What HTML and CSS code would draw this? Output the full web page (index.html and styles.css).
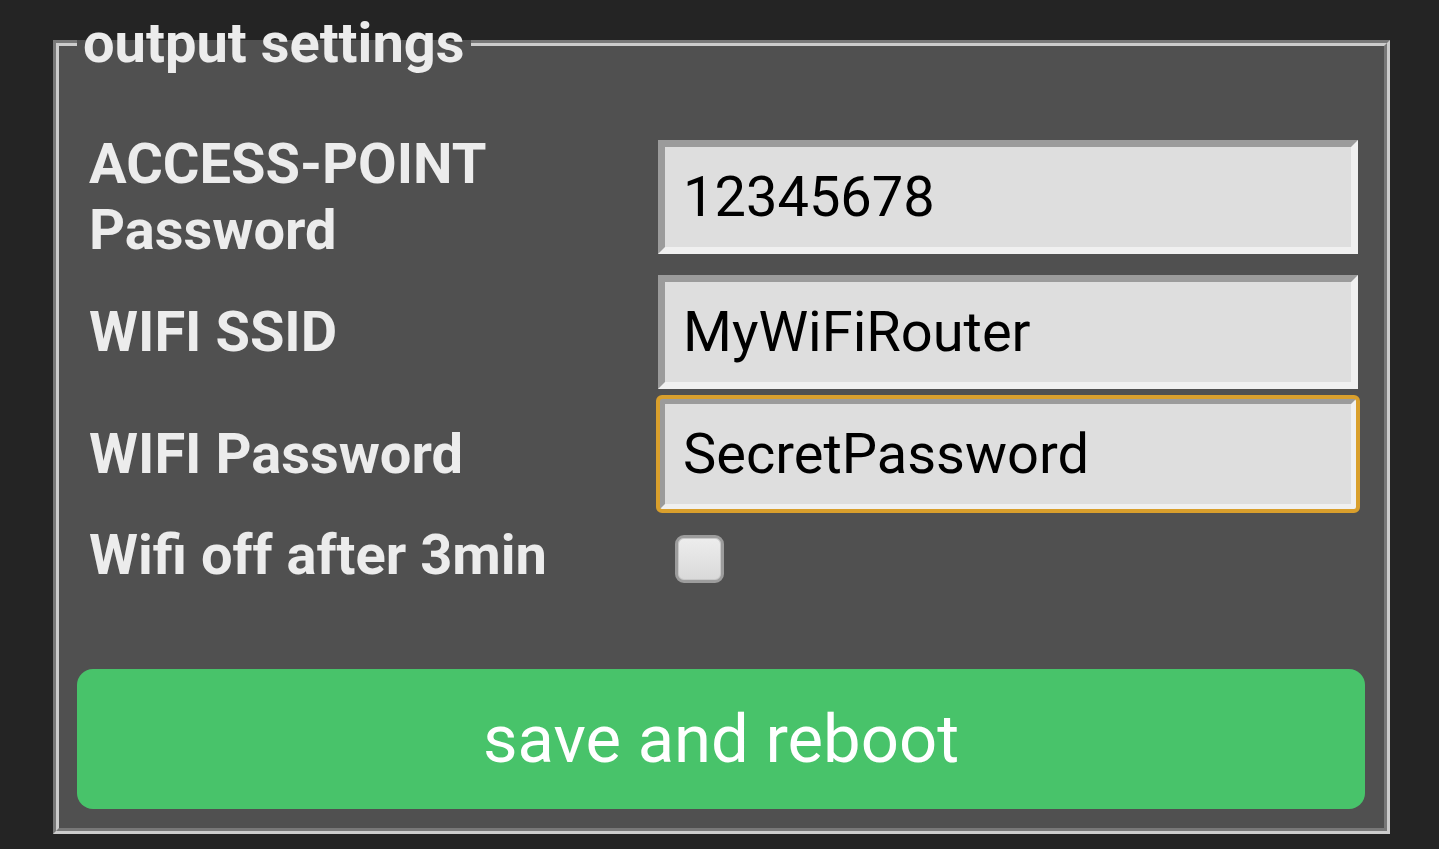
FILE: index.html
```html
<!DOCTYPE html>
<html lang="en">
<head>
<meta charset="utf-8">
<title>output settings</title>
<link rel="stylesheet" href="styles.css">
</head>
<body>
<div class="page">
  <fieldset class="panel">
    <legend class="panel-title">output settings</legend>
    <div class="form-grid">
      <label class="field-label field-label--tall" for="ap-pass">ACCESS-POINT Password</label>
      <input class="field-input" id="ap-pass" type="text" value="12345678">

      <label class="field-label" for="ssid">WIFI SSID</label>
      <input class="field-input" id="ssid" type="text" value="MyWiFiRouter">

      <label class="field-label" for="wifi-pass">WIFI Password</label>
      <input class="field-input field-input--focused" id="wifi-pass" type="text" value="SecretPassword">

      <label class="field-label field-label--last" for="wifi-off">Wifi off after 3min</label>
      <div class="check-cell"><span class="checkbox" id="wifi-off" role="checkbox" aria-checked="false"></span></div>
    </div>
    <button class="save-button" type="button">save and reboot</button>
  </fieldset>
</div>
</body>
</html>
```

FILE: styles.css
```css
html, body {
  margin: 0;
  padding: 0;
  background: #242424;
}

body {
  font-family: Roboto, "Liberation Sans", sans-serif;
  width: 1439px;
  height: 849px;
  overflow: hidden;
}

.page {
  padding: 10px 49px 0 53px;
}

.panel {
  margin: 0;
  min-inline-size: 0;
  border: 6px groove #cccccc;
  background: #505050;
  padding: 51px 19px 19px 18px;
  display: flex;
  flex-direction: column;
}

.panel-title {
  font-size: 56px;
  line-height: 66px;
  font-weight: 700;
  color: #ececec;
  padding: 0 6px;
}

.form-grid {
  display: grid;
  grid-template-columns: 569px 700px;
  row-gap: 8px;
  align-items: center;
  margin: 0 7px 0 12px;
}

.field-label {
  font-size: 56px;
  line-height: 66px;
  font-weight: 700;
  color: #ececec;
}

.field-label--tall {
  padding: 4px 0;
  width: 440px;
}

.field-label--last {
  margin-top: 3px;
}

.field-input {
  box-sizing: border-box;
  width: 700px;
  height: 114px;
  margin: 0;
  border: 7px solid;
  border-color: #9b9b9b #f0f0f0 #f0f0f0 #9b9b9b;
  background: #dedede;
  color: #000;
  font-family: Roboto, "Liberation Sans", sans-serif;
  font-size: 56px;
  padding: 0 0 0 18px;
}

.field-input--focused {
  border-radius: 4px;
  outline: 4px solid #d99f2c;
  outline-offset: -2px;
}

.check-cell {
  display: flex;
  align-items: center;
  height: 66px;
}

.checkbox {
  box-sizing: border-box;
  width: 49px;
  height: 48px;
  margin: 10px 0 0 17px;
  border: 3px solid #9c9c9c;
  border-radius: 9px;
  background: linear-gradient(#ededed, #d9d9d9);
  box-shadow: inset 0 0 0 1px #c9c9c9;
}

.save-button {
  flex: none;
  margin-top: 81px;
  height: 140px;
  width: 100%;
  border: none;
  border-radius: 16px;
  background: #48c36a;
  color: #ffffff;
  font-family: Roboto, "Liberation Sans", sans-serif;
  font-size: 67px;
  font-weight: 400;
  padding: 0;
}
```
